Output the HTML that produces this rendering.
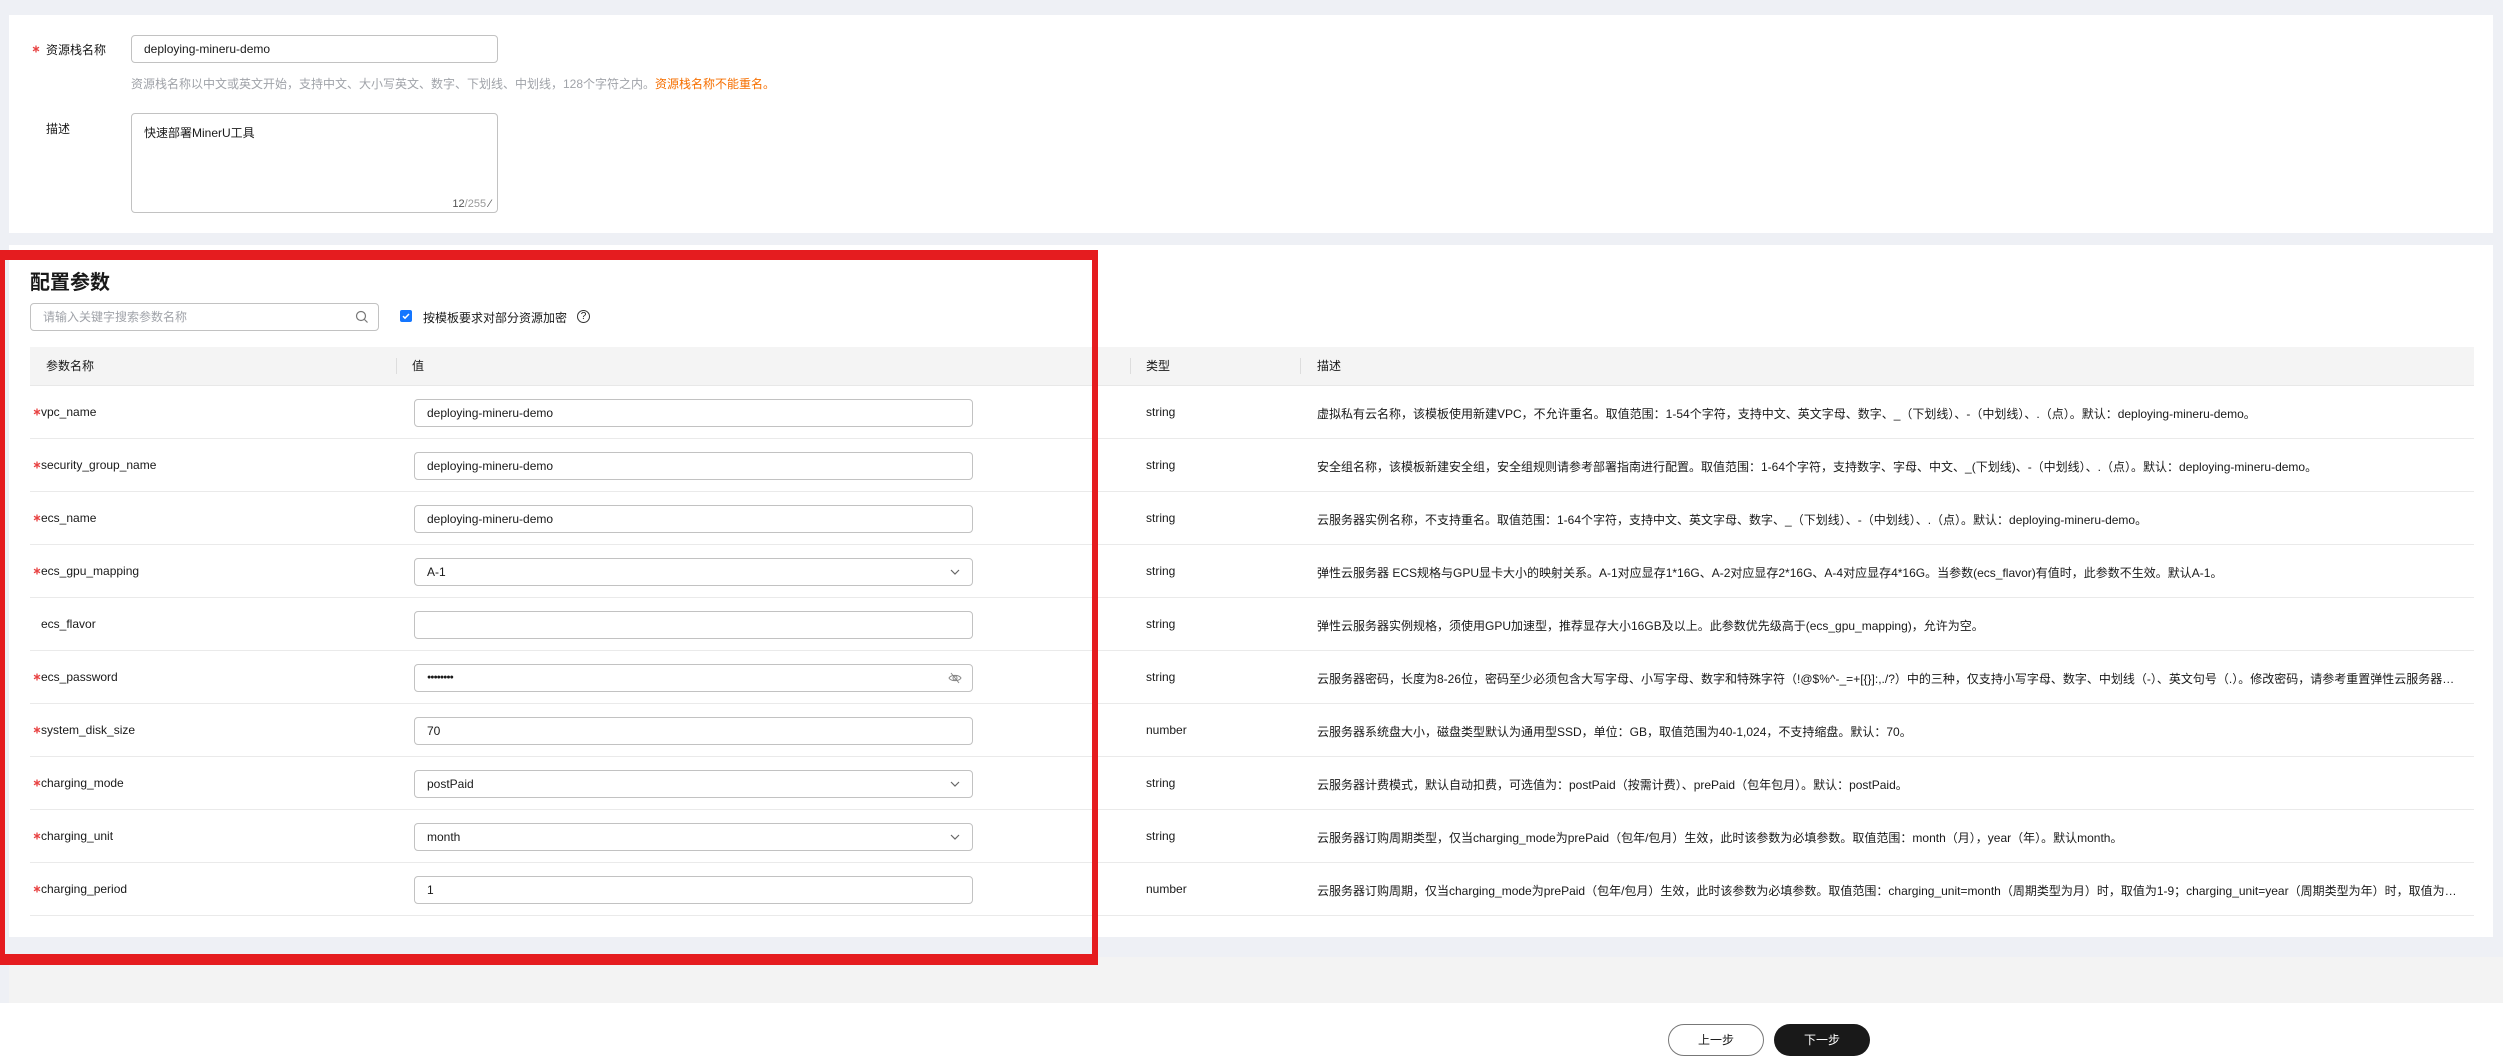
<!DOCTYPE html>
<html><head><meta charset="utf-8"><style>
*{box-sizing:border-box;margin:0;padding:0}
body{width:2503px;height:1063px;background:#eef0f5;font-family:"Liberation Sans","Noto Sans CJK SC",sans-serif;color:#191919;font-size:12px;position:relative;overflow:hidden}
.abs{position:absolute}
.panel{position:absolute;background:#fff;left:9px;right:10px}
.inp{position:absolute;border:1px solid #c2c2c2;border-radius:4px;background:#fff;height:28px;line-height:26px;padding-left:12px;font-size:12px;color:#191919}
.lbl{position:absolute;font-size:12px;white-space:nowrap}
.row{position:absolute;left:30px;width:2444px;height:53px;border-bottom:1px solid #eaeaea}
.row .n{position:absolute;left:11px;top:19px;font-size:12px}
.row .s{position:absolute;left:3px;top:22px}
.row .inp{left:384px;top:13px;width:559px}
.row .t{position:absolute;left:1116px;top:19px}
.row .d{position:absolute;left:1287px;top:19px;white-space:nowrap;max-width:1140px;overflow:hidden;text-overflow:ellipsis}
.chev{position:absolute;right:12px;top:9px}
</style></head><body>
<svg width="0" height="0" style="position:absolute"><defs><g id="st"><path d="M4 0.5V7.5M1 2.2L7 5.8M7 2.2L1 5.8" stroke="#e84343" stroke-width="1.3"/></g></defs></svg>
<div class="panel" style="top:15px;height:218px"></div>
<div class="panel" style="top:245px;height:692px"></div>
<div class="abs" style="left:9px;right:0;top:957px;height:46px;background:#f3f3f3"></div>
<div class="abs" style="left:0;right:0;top:1003px;height:60px;background:#fff"></div>

<svg class="abs" style="left:32px;top:45px" width="8" height="8"><use href="#st"/></svg>
<span class="lbl" style="left:46px;top:41px">资源栈名称</span>
<div class="inp" style="left:131px;top:35px;width:367px">deploying-mineru-demo</div>
<div class="abs" style="left:131px;top:75px;color:#a0a3a9;font-size:12px;white-space:nowrap">资源栈名称以中文或英文开始，支持中文、大小写英文、数字、下划线、中划线，128个字符之内。<span style="color:#f66f00">资源栈名称不能重名。</span></div>
<span class="lbl" style="left:46px;top:120px">描述</span>
<div class="inp" style="left:131px;top:113px;width:367px;height:100px;line-height:normal;padding-top:10px">快速部署MinerU工具<span class="abs" style="right:6px;bottom:2px;font-size:11px;color:#555">12<span style="color:#999">/255</span> ⁄</span></div>

<div class="abs" style="left:0;top:250px;width:1098px;height:715px;border:solid #e51c1f;border-width:10px 6px 11px 5px;z-index:5"></div>

<div class="abs" style="left:30px;top:266px;font-size:20px;font-weight:bold">配置参数</div>
<div class="inp" style="left:30px;top:303px;width:349px;color:#a0a3a9">请输入关键字搜索参数名称
<svg class="abs" style="right:9px;top:6px" width="14" height="14" viewBox="0 0 14 14"><circle cx="6" cy="6" r="4.5" fill="none" stroke="#777" stroke-width="1.2"/><path d="M9.5 9.5L12.5 12.5" stroke="#777" stroke-width="1.2"/></svg></div>
<div class="abs" style="left:400px;top:310px;width:12px;height:12px;background:#1476ff;border-radius:2px"><svg width="12" height="12" viewBox="0 0 12 12" style="display:block"><path d="M3 6.2l2 2 4-4.2" fill="none" stroke="#fff" stroke-width="1.5"/></svg></div>
<div class="abs" style="left:423px;top:309px;font-size:12px">按模板要求对部分资源加密</div>
<div class="abs" style="left:577px;top:310px;width:13px;height:13px;border:1px solid #333;border-radius:50%;font-size:10px;line-height:11px;text-align:center">?</div>

<div class="abs" style="left:30px;top:347px;width:2444px;height:39px;background:#f4f4f4;border-bottom:1px solid #e8e8e8"></div>
<div class="abs" style="left:46px;top:357px">参数名称</div>
<div class="abs" style="left:396px;top:358px;width:1px;height:16px;background:#ddd"></div>
<div class="abs" style="left:412px;top:357px">值</div>
<div class="abs" style="left:1130px;top:358px;width:1px;height:16px;background:#ddd"></div>
<div class="abs" style="left:1146px;top:357px">类型</div>
<div class="abs" style="left:1300px;top:358px;width:1px;height:16px;background:#ddd"></div>
<div class="abs" style="left:1317px;top:357px">描述</div>

<div class="row" style="top:386px"><svg class="s" width="8" height="8"><use href="#st"/></svg><span class="n">vpc_name</span><div class="inp">deploying-mineru-demo</div><span class="t">string</span><span class="d">虚拟私有云名称，该模板使用新建VPC，不允许重名。取值范围：1-54个字符，支持中文、英文字母、数字、_（下划线）、-（中划线）、.（点）。默认：deploying-mineru-demo。</span></div>
<div class="row" style="top:439px"><svg class="s" width="8" height="8"><use href="#st"/></svg><span class="n">security_group_name</span><div class="inp">deploying-mineru-demo</div><span class="t">string</span><span class="d">安全组名称，该模板新建安全组，安全组规则请参考部署指南进行配置。取值范围：1-64个字符，支持数字、字母、中文、_(下划线)、-（中划线）、.（点）。默认：deploying-mineru-demo。</span></div>
<div class="row" style="top:492px"><svg class="s" width="8" height="8"><use href="#st"/></svg><span class="n">ecs_name</span><div class="inp">deploying-mineru-demo</div><span class="t">string</span><span class="d">云服务器实例名称，不支持重名。取值范围：1-64个字符，支持中文、英文字母、数字、_（下划线）、-（中划线）、.（点）。默认：deploying-mineru-demo。</span></div>
<div class="row" style="top:545px"><svg class="s" width="8" height="8"><use href="#st"/></svg><span class="n">ecs_gpu_mapping</span><div class="inp">A-1<svg class="chev" width="10" height="8" viewBox="0 0 10 8"><path d="M1 2l4 4 4-4" fill="none" stroke="#666" stroke-width="1.2"/></svg></div><span class="t">string</span><span class="d">弹性云服务器 ECS规格与GPU显卡大小的映射关系。A-1对应显存1*16G、A-2对应显存2*16G、A-4对应显存4*16G。当参数(ecs_flavor)有值时，此参数不生效。默认A-1。</span></div>
<div class="row" style="top:598px"><span class="n">ecs_flavor</span><div class="inp"></div><span class="t">string</span><span class="d">弹性云服务器实例规格，须使用GPU加速型，推荐显存大小16GB及以上。此参数优先级高于(ecs_gpu_mapping)，允许为空。</span></div>
<div class="row" style="top:651px"><svg class="s" width="8" height="8"><use href="#st"/></svg><span class="n">ecs_password</span><div class="inp" style="font-size:7px;letter-spacing:-1px">●●●●●●●●<svg class="abs" style="right:10px;top:7px" width="14" height="12" viewBox="0 0 14 12"><path d="M1 6c2-3.5 10-3.5 12 0c-2 3.5-10 3.5-12 0z" fill="none" stroke="#888" stroke-width="1"/><circle cx="7" cy="6" r="2" fill="none" stroke="#888"/><path d="M3 1l8 10" stroke="#888"/></svg></div><span class="t">string</span><span class="d">云服务器密码，长度为8-26位，密码至少必须包含大写字母、小写字母、数字和特殊字符（!@$%^-_=+[{}]:,./?）中的三种，仅支持小写字母、数字、中划线（-）、英文句号（.）。修改密码，请参考重置弹性云服务器密码进行操作。</span></div>
<div class="row" style="top:704px"><svg class="s" width="8" height="8"><use href="#st"/></svg><span class="n">system_disk_size</span><div class="inp">70</div><span class="t">number</span><span class="d">云服务器系统盘大小，磁盘类型默认为通用型SSD，单位：GB，取值范围为40-1,024，不支持缩盘。默认：70。</span></div>
<div class="row" style="top:757px"><svg class="s" width="8" height="8"><use href="#st"/></svg><span class="n">charging_mode</span><div class="inp">postPaid<svg class="chev" width="10" height="8" viewBox="0 0 10 8"><path d="M1 2l4 4 4-4" fill="none" stroke="#666" stroke-width="1.2"/></svg></div><span class="t">string</span><span class="d">云服务器计费模式，默认自动扣费，可选值为：postPaid（按需计费）、prePaid（包年包月）。默认：postPaid。</span></div>
<div class="row" style="top:810px"><svg class="s" width="8" height="8"><use href="#st"/></svg><span class="n">charging_unit</span><div class="inp">month<svg class="chev" width="10" height="8" viewBox="0 0 10 8"><path d="M1 2l4 4 4-4" fill="none" stroke="#666" stroke-width="1.2"/></svg></div><span class="t">string</span><span class="d">云服务器订购周期类型，仅当charging_mode为prePaid（包年/包月）生效，此时该参数为必填参数。取值范围：month（月），year（年）。默认month。</span></div>
<div class="row" style="top:863px"><svg class="s" width="8" height="8"><use href="#st"/></svg><span class="n">charging_period</span><div class="inp">1</div><span class="t">number</span><span class="d">云服务器订购周期，仅当charging_mode为prePaid（包年/包月）生效，此时该参数为必填参数。取值范围：charging_unit=month（周期类型为月）时，取值为1-9；charging_unit=year（周期类型为年）时，取值为1-3。</span></div>

<div class="abs" style="left:1668px;top:1024px;width:96px;height:32px;border:1px solid #777;border-radius:16px;text-align:center;line-height:30px;background:#fff">上一步</div>
<div class="abs" style="left:1774px;top:1024px;width:96px;height:32px;border-radius:16px;text-align:center;line-height:32px;background:#191919;color:#fff">下一步</div>
</body></html>
